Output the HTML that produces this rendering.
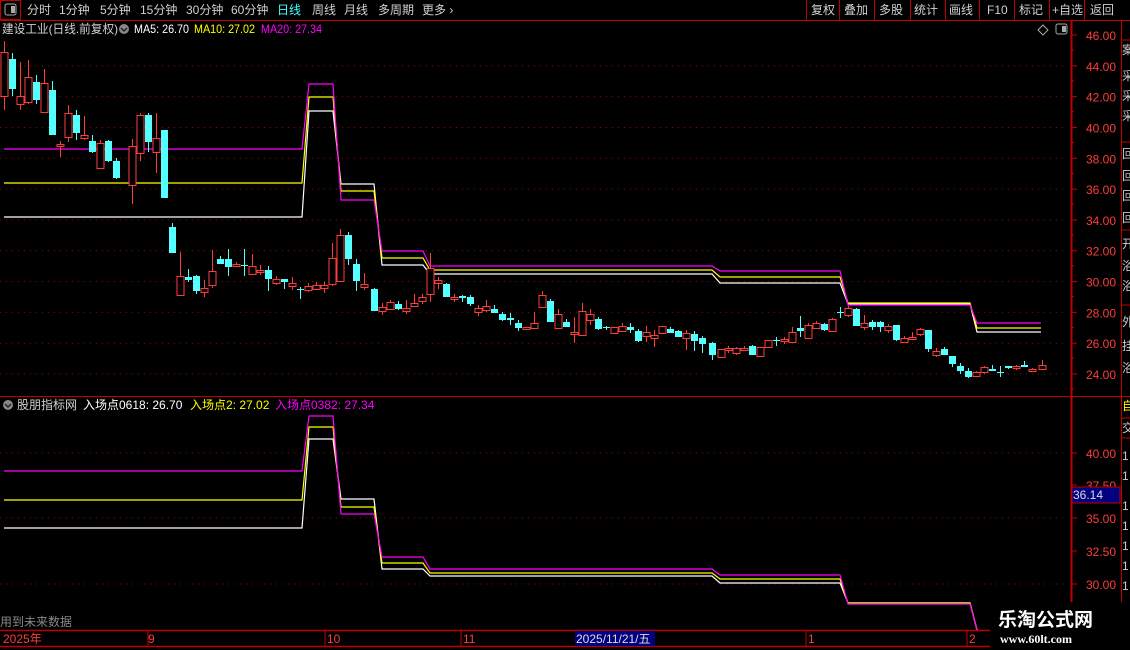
<!DOCTYPE html>
<html><head><meta charset="utf-8"><style>
body{margin:0;background:#000;width:1130px;height:650px;overflow:hidden;font-family:"Liberation Sans","Noto Sans CJK SC",sans-serif;}
svg{position:absolute;left:0;top:0}
</style></head><body>
<svg id="s" width="1130" height="650" xmlns="http://www.w3.org/2000/svg" font-family="Liberation Sans, Noto Sans CJK SC, sans-serif">
<!-- top bar -->
<line x1="0" y1="20.5" x2="1130" y2="20.5" stroke="#c00000"/>
<rect x="0.5" y="0.5" width="20" height="19" fill="none" stroke="#c00000"/>
<rect x="5" y="4" width="11" height="11" rx="2" fill="none" stroke="#aaa"/><rect x="11" y="6" width="4" height="7" fill="#aaa"/>
<g font-size="12" fill="#d0d0d0">
<text x="27" y="14">分时</text><text x="59" y="14">1分钟</text><text x="100" y="14">5分钟</text><text x="140" y="14">15分钟</text><text x="186" y="14">30分钟</text><text x="231" y="14">60分钟</text>
<text x="277" y="14" fill="#40ffff">日线</text><text x="312" y="14">周线</text><text x="344" y="14">月线</text><text x="378" y="14">多周期</text><text x="422" y="14">更多 ›</text>
</g>
<g stroke="#c00000"><line x1="806.5" y1="0" x2="806.5" y2="20"/><line x1="839.5" y1="0" x2="839.5" y2="20"/><line x1="874.5" y1="0" x2="874.5" y2="20"/><line x1="910.5" y1="0" x2="910.5" y2="20"/><line x1="945.5" y1="0" x2="945.5" y2="20"/><line x1="979.5" y1="0" x2="979.5" y2="20"/><line x1="1014.5" y1="0" x2="1014.5" y2="20"/><line x1="1049.5" y1="0" x2="1049.5" y2="20"/><line x1="1084.5" y1="0" x2="1084.5" y2="20"/></g>
<g font-size="12" fill="#d0d0d0"><text x="811" y="14">复权</text><text x="844" y="14">叠加</text><text x="879" y="14">多股</text><text x="914" y="14">统计</text><text x="949" y="14">画线</text><text x="987" y="14">F10</text><text x="1019" y="14">标记</text><text x="1052" y="14">+自选</text><text x="1090" y="14">返回</text></g>
<!-- title -->
<g font-size="12"><text x="2" y="33" fill="#d0d0d0" textLength="116" lengthAdjust="spacingAndGlyphs">建设工业(日线.前复权)</text>
<circle cx="124" cy="29" r="5" fill="#888"/><path d="M121 28l3 3 3-3" stroke="#222" fill="none" stroke-width="1.5"/>
<text x="134" y="33" fill="#fff" textLength="55" lengthAdjust="spacingAndGlyphs">MA5: 26.70</text><text x="194" y="33" fill="#ffff00" textLength="61" lengthAdjust="spacingAndGlyphs">MA10: 27.02</text><text x="261" y="33" fill="#ff00ff" textLength="61" lengthAdjust="spacingAndGlyphs">MA20: 27.34</text></g>
<path d="M1043 25l5 5-5 5-5-5z" fill="none" stroke="#aaa"/>
<rect x="1056" y="24" width="11" height="10" rx="2" fill="none" stroke="#aaa"/><rect x="1062" y="26" width="4" height="6" fill="#aaa"/>
<!-- axes -->
<line x1="1071.5" y1="20" x2="1071.5" y2="630" stroke="#c00000" stroke-width="2"/>
<line x1="1121.5" y1="20" x2="1121.5" y2="630" stroke="#c00000"/>
<line x1="0" y1="396.5" x2="1130" y2="396.5" stroke="#c00000"/>
<g id="grid" stroke="#a00000" stroke-dasharray="1,5"></g>
<g id="axis" font-size="12" fill="#ff3c3c"></g>
<g id="lines" fill="none" stroke-width="1.2"></g>
<g id="candles"></g>
<!-- lower title -->
<g font-size="12"><circle cx="8" cy="405" r="5" fill="#888"/><path d="M5 404l3 3 3-3" stroke="#222" fill="none" stroke-width="1.5"/>
<text x="17" y="409" fill="#d0d0d0">股朋指标网</text><text x="83" y="409" fill="#fff">入场点0618: 26.70</text><text x="190" y="409" fill="#ffff00">入场点2: 27.02</text><text x="275" y="409" fill="#ff00ff">入场点0382: 27.34</text></g>
<rect x="1072" y="487" width="48" height="16" fill="#000080" stroke="#c00000"/>
<text x="1073" y="499" font-size="12" fill="#ddd">36.14</text>
<!-- right strip -->
<g stroke="#c00000"><line x1="1121" y1="40" x2="1130" y2="40"/><line x1="1121" y1="142" x2="1130" y2="142"/><line x1="1121" y1="230" x2="1130" y2="230"/><line x1="1121" y1="305" x2="1130" y2="305"/><line x1="1121" y1="418" x2="1130" y2="418"/><line x1="1121" y1="438" x2="1130" y2="438"/></g>
<g font-size="12" fill="#ccc"><text x="1122" y="54">案</text><text x="1122" y="80">采</text><text x="1122" y="100">采</text><text x="1122" y="120">采</text><text x="1122" y="158">回</text><text x="1122" y="180">回</text><text x="1122" y="200">回</text><text x="1122" y="222">回</text><text x="1122" y="248">开</text><text x="1122" y="270">浴</text><text x="1122" y="290">浴</text><text x="1122" y="326">外</text><text x="1122" y="350">挂</text><text x="1122" y="372">浴</text><text x="1122" y="410" fill="#ff0">自</text><text x="1122" y="432">交</text></g>
<g font-size="12" fill="#ccc"><text x="1122" y="460">1</text><text x="1122" y="480">1</text><text x="1122" y="510">1</text><text x="1122" y="530">1</text><text x="1122" y="550">1</text><text x="1122" y="570">1</text><text x="1122" y="590">1</text></g>
<!-- bottom -->
<text x="0" y="626" font-size="12" fill="#888">用到未来数据</text>
<line x1="0" y1="630.5" x2="1000" y2="630.5" stroke="#c00000" stroke-width="1.5"/>
<line x1="0" y1="646.5" x2="1000" y2="646.5" stroke="#c00000" stroke-width="1.5"/>
<rect x="575" y="631" width="80" height="15" fill="#000080"/>
<g font-size="12" fill="#ff3c3c"><text x="3" y="643">2025年</text><text x="148" y="643">9</text><text x="327" y="643">10</text><text x="463" y="643">11</text><text x="576" y="643" fill="#ddd">2025/11/21/五</text><text x="808" y="643">1</text><text x="969" y="643">2</text></g>
<g stroke="#c00000"><line x1="148" y1="631" x2="148" y2="646"/><line x1="325" y1="631" x2="325" y2="646"/><line x1="461" y1="631" x2="461" y2="646"/><line x1="806" y1="631" x2="806" y2="646"/><line x1="967" y1="631" x2="967" y2="646"/></g>
<rect x="990" y="602" width="140" height="48" fill="#000"/>
<text x="998" y="626" font-size="19" font-weight="bold" fill="#fff">乐淘公式网</text>
<text x="1000" y="643" font-size="12" font-weight="bold" fill="#fff" font-family="Liberation Serif, serif">www.60lt.com</text>
</svg>
<script>
var NS="http://www.w3.org/2000/svg";
function el(p,t,a){var e=document.createElementNS(NS,t);for(var k in a)e.setAttribute(k,a[k]);document.getElementById(p).appendChild(e);return e;}
for(var i=0;i<12;i++){var y=35+i*30.82,v=(46-2*i).toFixed(2);
 if(i>0)el("grid","line",{x1:0,y1:y,x2:1068,y2:y});
 el("axis","line",{x1:1071,y1:y,x2:1077,y2:y,stroke:"#c00000"});
 el("axis","line",{x1:1071,y1:y+15,x2:1074,y2:y+15,stroke:"#c00000"});
 var t=el("axis","text",{x:1086,y:y+5});t.textContent=v;}
[[453,"40.00"],[485,"37.50"],[518,"35.00"],[551,"32.50"],[584,"30.00"]].forEach(function(a){
 if(a[1]!="37.50"&&a[1]!="32.50")el("grid","line",{x1:0,y1:a[0],x2:1068,y2:a[0]});
 el("axis","line",{x1:1071,y1:a[0],x2:1077,y2:a[0],stroke:"#c00000"});
 var t=el("axis","text",{x:1086,y:a[0]+5});t.textContent=a[1];});
function step(segs,col){var d="";segs.forEach(function(s,i){d+=(i?"L":"M")+s[0]+" "+s[2]+"L"+s[1]+" "+s[2];});el("lines","path",{d:d,stroke:col});}
var X=[[4,302],[309,333],[341,374],[382,423],[430,712],[720,840],[848,970],[977,1041]];
function mk(ys){return X.map(function(x,i){return [x[0],x[1],ys[i]];});}
step(mk([217,111,184,265,274,283,304,332]),"#fff");
step(mk([183,97,191,258,270,277,303,328]),"#ffff00");
step(mk([149,84,200,251,266,271,305,323]),"#ff00ff");
step(mk([528,439,499,569,576,583,603,630]).slice(0,7).concat([[977,978,630]]),"#fff");
step(mk([500,427,507,563,573,579,603,630]).slice(0,7).concat([[977,978,630]]),"#ffff00");
step(mk([471,416,514,557,569,575,604,630]).slice(0,7).concat([[977,978,630]]),"#ff00ff");
var C=[[4,52,96,41,110,1],[12,59,89,53,96,0],[20,96,104,62,110,1],[28,77,102,60,104,1],[36,82,100,75,104,0],[44,83,112,69,113,1],[52,90,135,81,135,0],[60,144,146,141,157,1],[68,113,137,105,142,1],[76,115,133,110,140,0],[84,135,138,116,140,1],[92,141,152,135,153,0],[100,143,168,140,169,1],[108,141,161,140,162,0],[116,161,178,158,179,0],[132,146,185,139,204,1],[140,115,153,113,161,1],[148,115,142,113,152,0],[156,138,152,113,173,1],[164,130,198,130,198,0],
[172,227,253,223,253,0],[180,276,295,252,295,1],[188,277,280,269,282,0],[196,276,291,275,294,0],[204,288,292,280,297,1],[212,271,285,250,288,1],[220,259,264,256,264,0],[228,259,267,249,276,0],[236,264,266,262,266,1],[244,265,266,249,276,0],[252,266,274,254,275,1],[260,270,272,265,275,1],[268,270,279,266,291,0],[276,279,283,276,285,1],[284,279,282,279,289,0],[292,283,286,277,290,1],[300,289,290,287,299,0],[308,286,290,283,292,1],[316,285,289,282,290,1],[324,285,288,282,293,1],[332,258,284,243,286,1],[340,235,281,229,282,1],[348,235,259,232,265,0],[356,264,281,259,291,0],[364,284,287,273,290,1],[374,289,311,288,311,0],[382,307,311,303,315,1],[390,302,309,300,310,1],[398,304,309,301,310,0],[406,308,311,300,314,1],[414,303,306,294,307,1],[422,297,301,294,304,1],[430,268,294,253,302,1],[438,280,283,277,289,1],[446,284,297,283,297,0],[454,297,299,294,302,1],[462,296,298,295,302,0],[470,297,304,295,306,0],[478,308,312,305,316,1],[486,306,310,300,312,1],[494,309,313,305,313,0],[502,314,320,312,321,0],[510,318,320,313,325,0],[518,323,328,320,331,0],[526,327,329,327,329,1],[534,323,328,312,329,1],[542,295,307,291,307,1],[550,301,322,299,322,0],[558,314,328,309,328,1],[566,322,327,319,327,0],[574,332,334,317,343,1],[582,311,335,303,335,1],[590,314,320,309,325,1],[598,319,329,317,330,0],[606,327,328,326,330,0],[614,327,333,327,334,1],[622,326,331,323,331,1],[630,327,330,323,333,0],[638,331,341,329,342,0],[646,332,336,326,342,1],[654,335,338,330,347,1],[662,326,333,326,333,1],[670,329,333,327,333,0],[678,331,337,330,337,0],[686,333,338,330,350,1],[694,334,341,331,351,0],[702,338,344,336,353,0],[712,343,355,342,360,0],[721,349,357,349,357,1],[728,348,350,346,353,1],[736,348,353,347,355,1],[744,348,350,346,351,1],[752,346,355,345,355,0],[760,347,356,347,356,1],[768,340,347,340,347,1],[776,340,341,337,346,0],[784,339,341,337,344,1],[792,332,342,327,342,1],[800,328,331,316,337,0],[808,325,338,323,338,1],[816,323,328,321,329,1],[824,324,330,323,331,0],[832,319,331,318,331,1],[840,312,313,307,318,0],[848,308,315,306,317,1],[856,309,326,308,326,0],[864,323,327,315,330,1],[872,322,327,320,330,0],[880,322,327,321,332,0],[888,326,330,324,333,1],[896,325,340,325,341,0],[904,338,342,336,343,1],[912,337,339,332,339,1],[920,329,334,328,336,1],[928,330,349,330,352,0],[936,351,355,348,357,1],[944,349,355,347,355,0],[952,356,364,356,367,0],[960,366,371,363,374,0],[968,371,377,368,378,0],[976,372,376,371,377,1],[984,367,372,366,374,1],[992,369,371,365,371,0],[1000,372,373,366,377,0],[1008,366,368,366,369,0],[1016,366,368,365,370,1],[1024,365,367,361,367,0],[1032,369,371,368,372,1],[1042,365,369,360,369,1]];
C.forEach(function(c){var col=c[5]?"#ff3c3c":"#54ffff";var cx=c[0]+0.5;
 el("candles","line",{x1:cx,y1:c[3],x2:cx,y2:c[4],stroke:col});
 var h=Math.max(1,c[2]-c[1]);
 if(c[5])el("candles","rect",{x:c[0]-3,y:c[1]+0.5,width:7,height:h,fill:"#000",stroke:col});
 else el("candles","rect",{x:c[0]-3,y:c[1],width:7,height:h,fill:col});});
</script>
</body></html>
